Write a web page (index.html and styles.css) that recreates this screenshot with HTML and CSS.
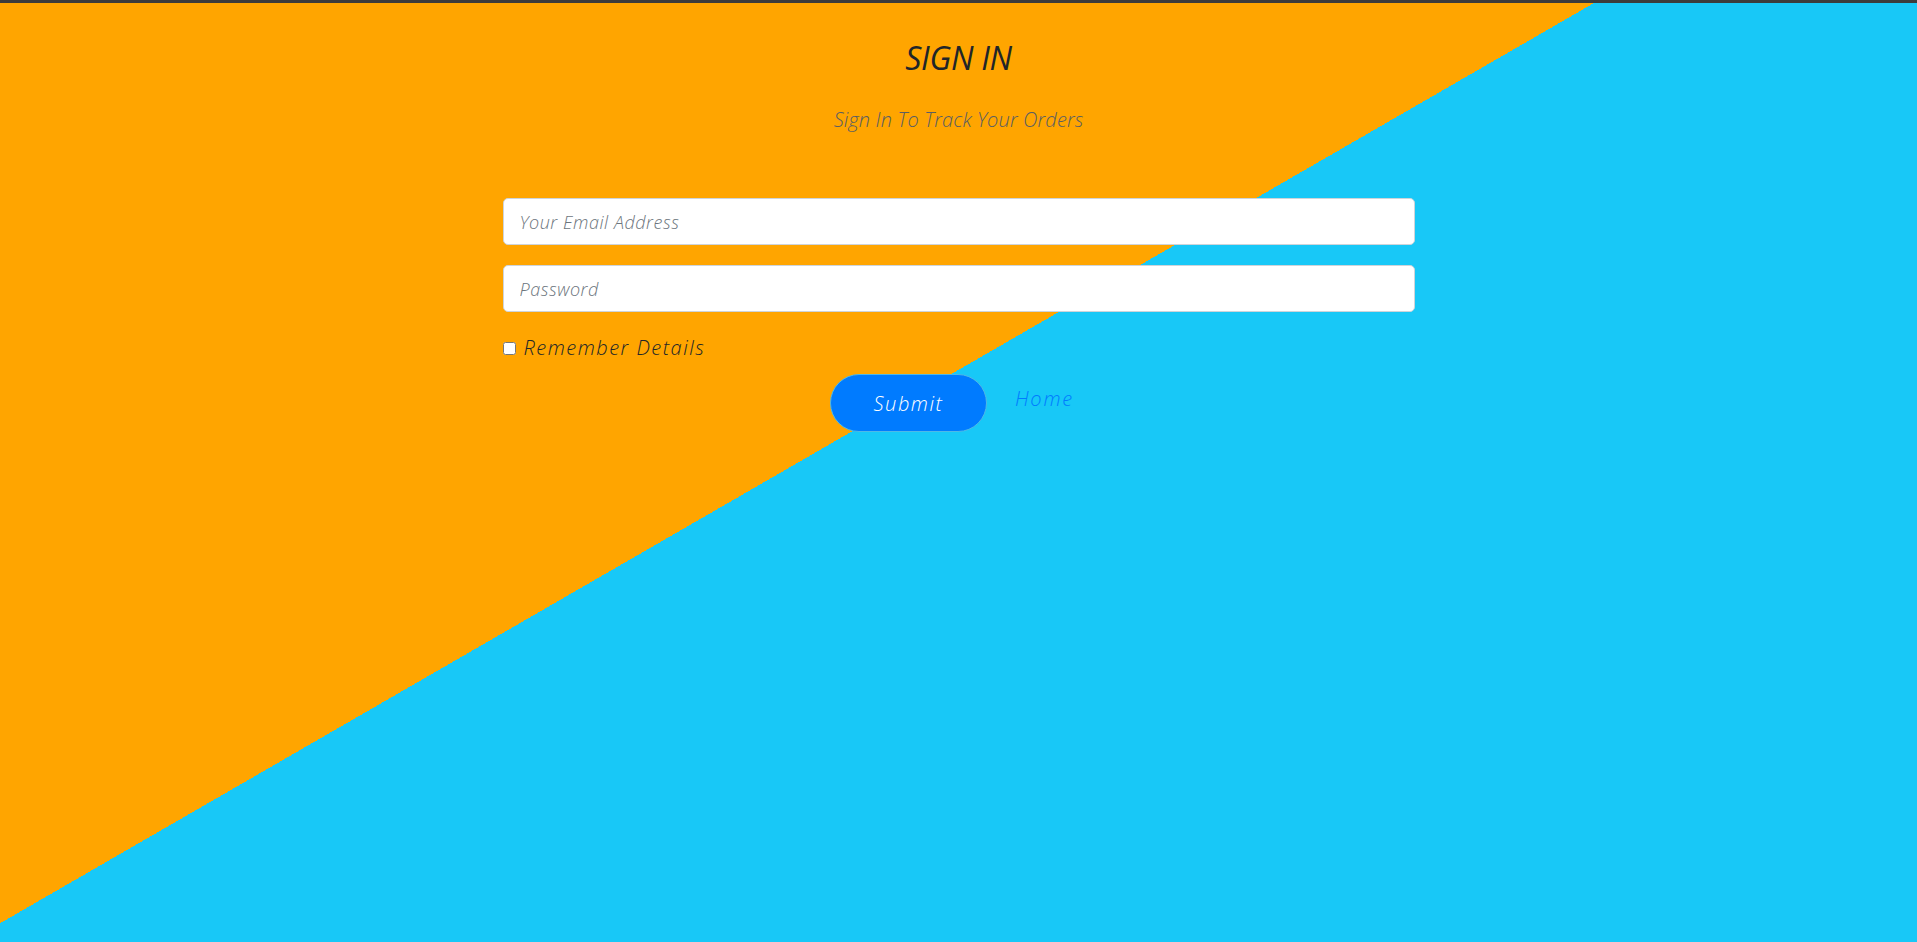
FILE: index.html
```html
<!DOCTYPE html>
<html lang="en">
<head>
<meta charset="utf-8">
<title>Sign In</title>
<link rel="stylesheet" href="styles.css">
</head>
<body>
<div class="topbar"></div>
<main class="page">
  <h2 class="title">SIGN IN</h2>
  <p class="lead">Sign In To Track Your Orders</p>
  <form class="form">
    <input class="field" type="email" placeholder="Your Email Address">
    <input class="field" type="password" placeholder="Password">
    <label class="remember"><input type="checkbox" class="check"> Remember Details</label>
    <div class="actions">
      <button type="button" class="submit">Submit</button>
      <a href="#" class="home">Home</a>
    </div>
  </form>
</main>
</body>
</html>
```

FILE: styles.css
```css
html, body {
  margin: 0;
  padding: 0;
}
body {
  font-family: "Open Sans", "DejaVu Sans", sans-serif;
  font-style: italic;
  color: #212529;
  background: #18c8f7;
}
.topbar {
  height: 3px;
  background: #3c3c3c;
}
.page {
  min-height: 939px;
  box-sizing: border-box;
  padding-top: 36px;
  background: linear-gradient(150deg, #ffa500 797px, #18c8f7 797px);
}
.title {
  margin: 0;
  text-align: center;
  font-size: 32px;
  line-height: 38px;
  font-weight: 400;
  font-style: italic;
  letter-spacing: -0.3px;
  color: #212529;
}
.lead {
  margin: 28px 0 0;
  text-align: center;
  font-size: 20px;
  line-height: 30px;
  font-weight: 300;
  letter-spacing: 0.15px;
  color: #5a5e63;
}
.form {
  width: 912px;
  margin: 63px auto 0;
  display: flex;
  flex-direction: column;
}
.field {
  box-sizing: border-box;
  height: 47px;
  margin: 0 0 20px;
  padding: 1px 16px 0;
  border: 1px solid #ced4da;
  border-radius: 5px;
  background: #fff;
  font-family: inherit;
  font-style: italic;
  font-size: 18px;
  font-weight: 300;
  letter-spacing: 0.55px;
  color: #495057;
}
.field::placeholder {
  color: #6c757d;
}
.remember {
  display: flex;
  align-items: center;
  padding-top: 1px;
  font-size: 20px;
  line-height: 30px;
  font-weight: 300;
  letter-spacing: 1.5px;
  color: #212529;
}
.check {
  width: 13px;
  height: 13px;
  margin: 0 8px 0 0;
}
.actions {
  margin-top: 11px;
  display: flex;
  justify-content: center;
  align-items: flex-start;
  gap: 28px;
  padding-right: 13px;
}
.submit {
  box-sizing: border-box;
  width: 157px;
  height: 58px;
  padding: 0;
  border-radius: 29px;
  border: 1px solid #4fb8e6;
  background: #007bff;
  color: #fff;
  font-family: inherit;
  font-style: italic;
  font-size: 20px;
  font-weight: 300;
  letter-spacing: 1.5px;
  cursor: pointer;
}
.home {
  margin-top: 10px;
  font-size: 20px;
  line-height: 30px;
  font-weight: 300;
  letter-spacing: 1.8px;
  color: #007bff;
  text-decoration: none;
}
```
